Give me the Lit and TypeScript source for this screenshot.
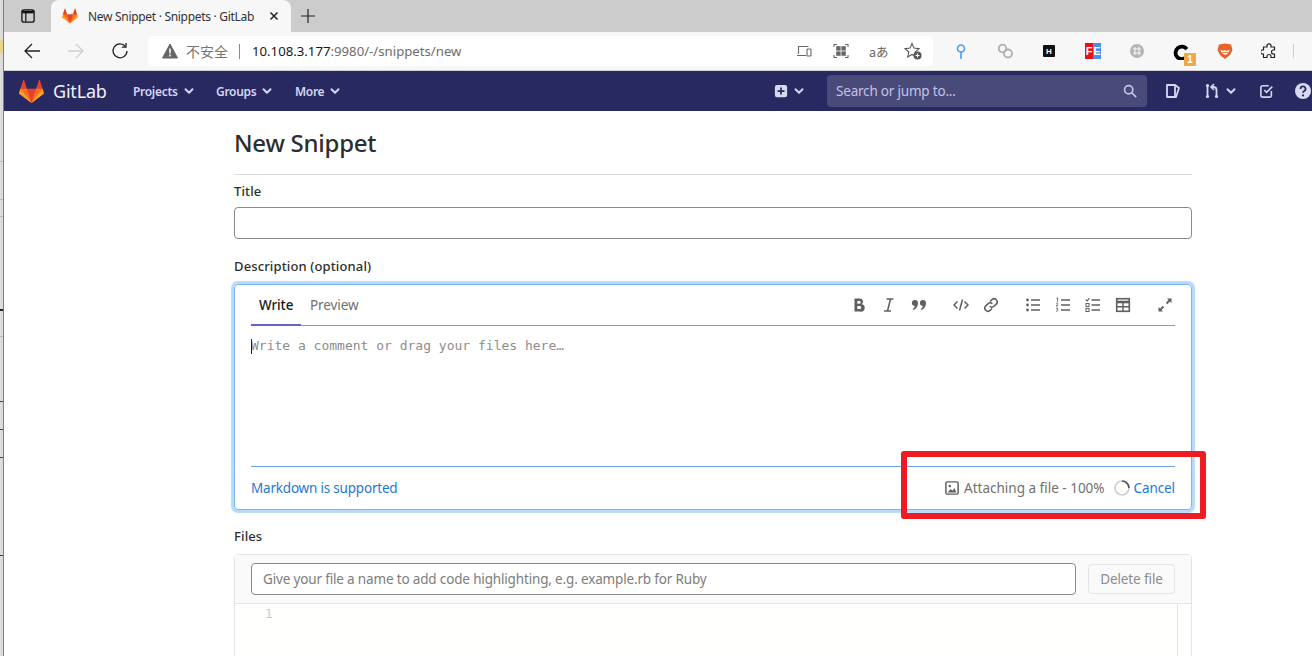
import { LitElement, html, css, svg } from "lit";
import { customElement } from "lit/decorators.js";

const tanuki = (w: number) => html`<svg width=${w} height=${w} viewBox="0 0 36 36">
  <path fill="#e24329" d="M2 14l9.38 9v-9l-4-12.28c-.205-.632-1.176-.632-1.38 0z"/>
  <path fill="#e24329" d="M34 14l-9.38 9v-9l4-12.28c.205-.632 1.176-.632 1.38 0z"/>
  <path fill="#e24329" d="M18,34.38 3,14 33,14 Z"/>
  <path fill="#fc6d26" d="M18,34.38 11.38,14 2,14 6,25Z"/>
  <path fill="#fc6d26" d="M18,34.38 24.62,14 34,14 30,25Z"/>
  <path fill="#fca326" d="M2 14L.1 20.16c-.18.565 0 1.2.5 1.56l17.42 12.66z"/>
  <path fill="#fca326" d="M34 14l1.9 6.16c.18.565 0 1.2-.5 1.56L18 34.38z"/>
</svg>`;

const chev = (c = "#d5d5f0") => html`<svg class="chev" width="10" height="10" viewBox="0 0 10 10" fill="none" stroke=${c} stroke-width="2" stroke-linecap="round" stroke-linejoin="round"><path d="M1.5 3.2 5 6.7l3.5-3.5"/></svg>`;

const ico = (w: number, body: unknown, vb = "0 0 16 16") => html`<svg width=${w} height=${w} viewBox=${vb} fill="none">${body}</svg>`;
const G = "#5f5f5f";
const N = "#d8d8f2";

@customElement("app-root")
export class AppRoot extends LitElement {
  static styles = css`
    :host { display: block; width: 1312px; height: 656px; overflow: hidden; background: #fff; font-family: "Noto Sans", sans-serif; color: #2e2e2e; position: relative; }
    * { box-sizing: border-box; }
    .page { display: flex; height: 656px; }
    .strip { width: 4px; flex: none; border-right: 1px solid #7d7d7d;
      background:
        linear-gradient(#222,#222) 0 309px/3px 2px no-repeat,
        linear-gradient(#bbb,#bbb) 0 161px/3px 1px no-repeat,
        linear-gradient(#bbb,#bbb) 0 199px/3px 1px no-repeat,
        linear-gradient(#bbb,#bbb) 0 216px/3px 1px no-repeat,
        linear-gradient(#bbb,#bbb) 0 336px/3px 1px no-repeat,
        linear-gradient(#444,#444) 0 401px/3px 1px no-repeat,
        linear-gradient(#444,#444) 0 429px/3px 1px no-repeat,
        linear-gradient(#444,#444) 0 457px/3px 1px no-repeat,
        linear-gradient(#246,#246) 0 555px/3px 1px no-repeat,
        linear-gradient(#e8d48c,#e8d48c) 0 40px/3px 13px no-repeat,
        #dcdcdc; }
    .main { flex: 1; min-width: 0; display: flex; flex-direction: column; overflow: hidden; }

    .tabs { height: 32px; background: #cccccc; display: flex; align-items: flex-start; flex: none; }
    .side-btn { width: 47px; height: 32px; display: flex; align-items: center; padding-left: 17px; }
    .tab { width: 240px; height: 32px; background: #f7f7f7; border-radius: 8px 8px 0 0; display: flex; align-items: center; padding-left: 11px; font-size: 12px; color: #333; }
    .tab-title { margin-left: 10px; width: 181px; white-space: nowrap; letter-spacing: -0.3px; flex: none; }
    .plus { margin-left: 9px; height: 32px; display: flex; align-items: center; }

    .toolbar { height: 39px; flex: none; background: #f7f7f7; display: flex; align-items: center; border-bottom: 1px solid #d2d2d2; position: relative; }
    .nav-btns { width: 144px; display: flex; align-items: center; padding-left: 19px; gap: 26px; flex: none; }
    .addr { width: 785px; height: 30px; flex: none; background: #fff; border-radius: 5px; display: flex; align-items: center; padding-left: 14px; font-size: 13.2px; color: #6d6d6d; }
    .warn { margin-right: 8px; display: flex; }
    .insecure { font-family: "Noto Sans CJK SC", sans-serif; font-size: 14px; color: #767676; }
    .addr-sep { width: 1px; height: 15px; background: #8a8a8a; margin: 0 12px 0 11px; }
    .host { color: #1a1a1a; }
    .addr-right { margin-left: auto; display: flex; align-items: center; padding-right: 11px; }
    .g21 { margin-left: 21px; display: flex; }
    .g19 { margin-left: 19px; display: flex; }
    .cjkA { font-size: 12.5px; color: #666; font-family: "Noto Sans CJK JP", sans-serif; width: 16px; white-space: nowrap; margin-left: 20px; }
    .exts { display: flex; align-items: center; margin-left: 20px; gap: 28px; flex: none; }
    .exts > * { flex: none; }
    .ext-sep { width: 1px; height: 14px; background: #cfcfcf; margin-left: -12px; flex: none; }
    .ext-last { margin-left: -11px; display: flex; }
    .hbox { width: 12px; height: 12px; margin: 0 2px; background: #111; color: #fff; border-radius: 1px; font: 700 8px "Liberation Sans", sans-serif; display: flex; align-items: center; justify-content: center; }
    .fe { width: 16px; height: 16px; display: flex; font: 700 11px/16px "Liberation Sans", sans-serif; color: #fff; }
    .fe span { display: block; width: 8px; text-align: center; }
    .fe .a { background: #e5101c; }
    .fe .b { background: #4a90ea; }
    .cbadge { position: relative; width: 16px; height: 16px; }
    .badge { position: absolute; left: 11px; top: 10px; width: 12px; height: 13px; background: #eda94c; color: #fff; border-radius: 1px; font: 700 10px/13px "Liberation Sans", sans-serif; text-align: center; }

    .gl { height: 40px; flex: none; background: #292961; display: flex; align-items: center; }
    .brand { display: flex; align-items: center; margin-left: 15px; gap: 9px; width: 114px; font-size: 18px; flex: none; }
    .brand b { font-weight: 400; letter-spacing: -0.2px; color: #f2f2f8; }
    .gl-item { display: flex; align-items: center; gap: 6px; font-size: 12px; font-weight: 600; color: #d5d5f0; white-space: nowrap; letter-spacing: -0.3px; flex: none; }
    .w1 { width: 83px; }
    .w2 { width: 79px; }
    .gl-right { margin-left: auto; display: flex; align-items: center; flex: none; width: 538px; }
    .plus-g { display: flex; align-items: center; gap: 6px; width: 53px; }
    .search { width: 320px; height: 32px; background: #4a4a7a; border-radius: 4px; display: flex; align-items: center; justify-content: space-between; padding: 0 10px 0 9px; font-size: 13.5px; color: #c2c2e6; letter-spacing: -0.2px; }
    .gl-icons { display: flex; align-items: center; margin-left: 18px; }
    .gl-icons > * { flex: none; }
    .mr { display: flex; align-items: center; gap: 6px; margin: 0 24px 0 23px; }
    .help { margin-left: 21px; position: relative; display: flex; }

    .content { width: 958px; margin-left: 230px; }
    h1 { font-size: 24px; line-height: 32px; font-weight: 500; margin: 0; padding: 16px 0 15px; border-bottom: 1px solid #dcdcdc; letter-spacing: -0.25px; height: 64px; color: #2e2e2e; }
    label { display: block; font-size: 13px; font-weight: 500; line-height: 18px; color: #2e2e2e; letter-spacing: 0.13px; }
    .l-title { margin-top: 7px; }
    .input { height: 32px; border: 1px solid #89888d; border-radius: 4px; background: #fff; margin-top: 7px; }
    .l-desc { margin-top: 18px; }

    .editor { margin-top: 9px; height: 226px; border: 1px solid #79b6f2; border-radius: 4px; box-shadow: 0 0 1px 3px #b9d9fb; padding: 0 16px; display: flex; flex-direction: column; }
    .ed-head { height: 41px; flex: none; border-bottom: 1px solid #6ca3e0; display: flex; align-items: stretch; font-size: 13.5px; }
    .t { display: flex; align-items: center; padding: 0 8px; letter-spacing: -0.1px; }
    .t.on { width: 50px; font-weight: 500; color: #1a1a1a; border-bottom: 2px solid #6666c4; margin-bottom: -1px; }
    .t.off { color: #707070; padding-left: 9px; }
    .tools { margin-left: auto; display: flex; align-items: center; margin-right: 2px; }
    .tool { width: 16px; height: 16px; display: flex; align-items: center; justify-content: center; flex: none; }
    .g14 { margin-left: 14px; }
    .g26 { margin-left: 26px; }
    .ed-body { flex: 1; display: flex; align-items: flex-start; padding-top: 12px; font: 13px/16px "DejaVu Sans Mono", monospace; color: #8d8d8d; border-bottom: 1px solid #6ca3e0; position: relative; white-space: pre; }
    .caret { position: absolute; left: 0; top: 13px; width: 1px; height: 15px; background: #222; }
    .ed-foot { height: 42px; flex: none; display: flex; align-items: center; font-size: 13.5px; color: #707070; }
    a { color: #1f78d1; text-decoration: none; }
    .md { letter-spacing: -0.2px; }
    .foot-r { margin-left: auto; display: flex; align-items: center; letter-spacing: -0.1px; }
    .att { margin-left: 5px; white-space: nowrap; letter-spacing: 0; }
    .spin { margin-left: 9px; margin-right: 4px; display: flex; }

    .l-files { margin-top: 17px; }
    .files { margin-top: 9px; height: 110px; border: 1px solid #e5e5e5; border-radius: 4px 4px 0 0; display: flex; flex-direction: column; }
    .f-head { height: 49px; flex: none; background: #fafafa; border-bottom: 1px solid #e5e5e5; display: flex; align-items: center; padding: 0 16px; gap: 12px; }
    .f-input { flex: 1; height: 32px; border: 1px solid #89888d; border-radius: 4px; background: #fff; display: flex; align-items: center; padding-left: 11px; font-size: 13.5px; color: #7d7d7d; white-space: nowrap; letter-spacing: -0.16px; }
    .del { width: 87px; height: 30px; border: 1px solid #e5e5e5; border-radius: 4px; background: #fafafa; display: flex; align-items: center; justify-content: center; font-size: 13.5px; color: #8c8c8c; letter-spacing: -0.1px; }
    .f-body { flex: 1; background: #fffffd; display: flex; font: 12.5px/16px "DejaVu Sans Mono", monospace; color: #c8c8c8; }
    .gut { padding: 2px 0 0 30px; }
    .sb { margin-left: auto; width: 14px; border-left: 1px solid #e5e5e5; background: #fff; }

    .mark { position: absolute; left: 901px; top: 451px; width: 305px; height: 68px; border: 6px solid #ed1c24; border-radius: 3px; pointer-events: none; }
  `;

  render() {
    return html`
      <div class="page">
        <div class="strip"></div>
        <div class="main">
          <div class="tabs">
            <div class="side-btn">${ico(14, svg`<rect x="1" y="1" width="14" height="14" rx="2.5" stroke="#111" stroke-width="1.5"/><path d="M1.5 3.5h13" stroke="#111" stroke-width="3"/><path d="M5.5 4.5v10" stroke="#111" stroke-width="1.4"/>`)}</div>
            <div class="tab">
              ${tanuki(16)}
              <span class="tab-title">New Snippet · Snippets · GitLab</span>
              ${ico(10, svg`<path d="M1.5 1.5l7 7M8.5 1.5l-7 7" stroke="#222" stroke-width="1.5"/>`, "0 0 10 10")}
            </div>
            <div class="plus">${ico(16, svg`<path d="M8 1v14M1 8h14" stroke="#222" stroke-width="1.2"/>`)}</div>
          </div>

          <div class="toolbar">
            <div class="nav-btns">
              ${ico(18, svg`<path d="M17 9H2M9 2 2 9l7 7" stroke="#222" stroke-width="1.3"/>`, "0 0 18 18")}
              ${ico(18, svg`<path d="M1 9h15M9 2l7 7-7 7" stroke="#cfcfcf" stroke-width="1.3"/>`, "0 0 18 18")}
              ${ico(18, svg`<path d="M14.5 4.5A7 7 0 1 0 16 9" stroke="#222" stroke-width="1.3"/><path d="M15 1v4.2h-4.2" stroke="#222" stroke-width="1.3"/>`, "0 0 18 18")}
            </div>
            <div class="addr">
              <span class="warn">${ico(16, svg`<path d="M8 1 .5 15h15z" fill="#666" stroke="#666" stroke-linejoin="round"/><path d="M8 5.5v5M8 11.5v2" stroke="#fff" stroke-width="1.5"/>`)}</span>
              <span class="insecure">不安全</span>
              <span class="addr-sep"></span>
              <span><span class="host">10.108.3.177</span>:9980/-/snippets/new</span>
              <div class="addr-right">
                ${ico(16, svg`<path d="M2.5 11V3.5h10M1 12.5h9" stroke="#666" stroke-width="1.1"/><rect x="11" y="6" width="4" height="7" rx=".6" stroke="#666" stroke-width="1.1"/>`)}
                <span class="g21">${ico(16, svg`<path d="M1 4V1.5h3M12 1.5h3V4M15 12v2.5h-3M4 14.5H1V12" stroke="#666" stroke-width="1.1"/><rect x="3.2" y="3.2" width="4.4" height="4.4" fill="#666"/><rect x="8.4" y="3.2" width="4.4" height="4.4" fill="#666"/><rect x="3.2" y="8.4" width="4.4" height="4.4" fill="#666"/><rect x="8.4" y="8.4" width="4.4" height="4.4" fill="#666"/>`)}</span>
                <span class="cjkA">aあ</span>
                <span class="g19">${ico(18, svg`<path d="M8 1.5l2 4.6 5 .5-3.8 3.3 1.1 4.9L8 12.5l-4.3 2.4 1.1-4.9L1 6.6l5-.5z" stroke="#555" stroke-width="1.1"/><circle cx="13.5" cy="13.5" r="4" fill="#555"/><path d="M13.5 11.5v4M11.5 13.5h4" stroke="#fff"/>`, "0 0 18 18")}</span>
              </div>
            </div>
            <div class="exts">
              ${ico(16, svg`<circle cx="8" cy="5.5" r="3.5" stroke="#4a9cf0" stroke-width="1.6"/><path d="M8 9v7" stroke="#4a9cf0" stroke-width="1.6"/>`)}
              ${ico(16, svg`<circle cx="5.5" cy="5.5" r="3.8" stroke="#b0b0b0" stroke-width="1.8"/><circle cx="11" cy="10.5" r="4" stroke="#b0b0b0" stroke-width="1.8"/>`)}
              <span class="hbox">H</span>
              <span class="fe"><span class="a">F</span><span class="b">E</span></span>
              ${ico(16, svg`<circle cx="8" cy="8" r="7" fill="#b5b5b5"/><path d="M4 6h8M4 10h8M6 4v8M10 4v8" stroke="#fff" stroke-width=".9"/>`)}
              <span class="cbadge">
                ${ico(16, svg`<path d="M13.2 13.2A6.2 6.2 0 1 1 13.8 5.2" stroke="#000" stroke-width="3.8"/>`)}
                <span class="badge">1</span>
              </span>
              ${ico(16, svg`<path d="M2 1.5 8 .5l6 1 1.5 5.5L13 12l-5 4-5-4L.5 7z" fill="#e8622a"/><path d="M3.5 6.5c2 1.6 3.5 1.6 4.5.6 1 1 2.5 1 4.5-.6-.5 3-2 4.8-4.5 5.5-2.5-.7-4-2.5-4.5-5.5z" fill="#fff"/><path d="M5 9.5h6" stroke="#e8622a" stroke-width=".8"/>`)}
              ${ico(16, svg`<path d="M6 2.8a2 2 0 0 1 4 0V4h3.5v3h-1a2 2 0 0 0 0 4h1v3.5H10v-1a2 2 0 0 0-4 0v1H2.5V11h-1a2 2 0 0 1 0-4h1V4H6z" stroke="#222" stroke-width="1.2"/>`)}
              <span class="ext-sep"></span>
              <span class="ext-last">${ico(16, svg`<path d="M3 3q3-2 6 0v5l-3 3-3-3z" stroke="#444" stroke-width="1.3"/>`)}</span>
            </div>
          </div>

          <div class="gl">
            <div class="brand">${tanuki(25)}<b>GitLab</b></div>
            <span class="gl-item w1">Projects ${chev()}</span>
            <span class="gl-item w2">Groups ${chev()}</span>
            <span class="gl-item">More ${chev()}</span>
            <div class="gl-right">
              <div class="plus-g">
                ${ico(14, svg`<rect x="1" y="1" width="14" height="14" rx="2.5" fill="${N}"/><path d="M8 4v8M4 8h8" stroke="#292961" stroke-width="2"/>`)}
                ${chev()}
              </div>
              <div class="search">
                <span>Search or jump to...</span>
                ${ico(14, svg`<circle cx="6.5" cy="6.5" r="4.7" stroke="#c2c2e6" stroke-width="2"/><path d="M10 10l4.5 4.5" stroke="#c2c2e6" stroke-width="2" stroke-linecap="round"/>`)}
              </div>
              <div class="gl-icons">
                ${ico(16, svg`<path d="M2 2h8l4 3-3 9H2z" stroke="${N}" stroke-width="1.8" stroke-linejoin="round"/><path d="M10 2v11" stroke="${N}" stroke-width="1.8"/>`)}
                <span class="mr">
                  ${ico(16, svg`<circle cx="3.5" cy="2.5" r="1.6" fill="${N}"/><circle cx="3.5" cy="13.5" r="1.6" fill="${N}"/><path d="M3.5 3v10" stroke="${N}" stroke-width="1.8"/><circle cx="12.5" cy="13.5" r="1.6" fill="${N}"/><path d="M12.5 13V7q0-3-3-3H8" stroke="${N}" stroke-width="1.8"/><path d="M10 1 7 4l3 3" stroke="${N}" stroke-width="1.6"/>`)}
                  ${chev()}
                </span>
                ${ico(14, svg`<path d="M13 8v5a2 2 0 0 1-2 2H3a2 2 0 0 1-2-2V4a2 2 0 0 1 2-2h7" stroke="${N}" stroke-width="1.8"/><path d="M5 7l2.5 2.5L14 3" stroke="${N}" stroke-width="1.8"/>`)}
                <span class="help">${ico(16, svg`<circle cx="8" cy="8" r="8" fill="${N}"/><path d="M5.5 6a2.5 2.5 0 1 1 3.5 2.2c-.7.4-1 .8-1 1.6" stroke="#292961" stroke-width="1.8"/><circle cx="8" cy="12.4" r="1.1" fill="#292961"/>`)}</span>
              </div>
            </div>
          </div>

          <div class="content">
            <h1>New Snippet</h1>
            <label class="l-title">Title</label>
            <div class="input"></div>
            <label class="l-desc">Description (optional)</label>
            <div class="editor">
              <div class="ed-head">
                <span class="t on">Write</span>
                <span class="t off">Preview</span>
                <div class="tools">
                  <span class="tool">${ico(16, svg`<path d="M3.5 1.5h5.2a3.2 3.2 0 0 1 2.1 5.7A3.5 3.5 0 0 1 9 14.5H3.5zM6.3 4v2.8h2a1.4 1.4 0 0 0 0-2.8zM6.3 9v3h2.5a1.5 1.5 0 0 0 0-3z" fill="${G}" fill-rule="evenodd"/>`)}</span>
                  <span class="tool g14">${ico(16, svg`<path d="M5.500 2h7M3 14h7M9.500 2l-3 12" stroke="${G}" stroke-width="1.5"/>`)}</span>
                  <span class="tool g14">${ico(16, svg`<path d="M3.2 3a3 3 0 0 1 3.8 3c0 3.5-2 6-4.6 7l-.6-1.2c1.2-.7 1.9-1.6 2.1-2.7A3.1 3.1 0 0 1 3.2 3zM11.2 3a3 3 0 0 1 3.8 3c0 3.5-2 6-4.6 7l-.6-1.2c1.2-.7 1.9-1.6 2.1-2.7A3.1 3.1 0 0 1 11.2 3z" fill="${G}"/>`)}</span>
                  <span class="tool g26">${ico(16, svg`<path d="M4.5 4.5 1 8l3.5 3.5M11.5 4.5 15 8l-3.5 3.5M9.5 2.5l-3 11" stroke="${G}" stroke-width="1.5"/>`)}</span>
                  <span class="tool g14">${ico(16, svg`<path d="M7 4.5l1.8-1.8a3 3 0 0 1 4.4 4.4L11 9.3a3 3 0 0 1-4.3 0M9 11.500l-1.8 1.8a3 3 0 0 1-4.4-4.4L5 6.7a3 3 0 0 1 4.3 0" stroke="${G}" stroke-width="1.6"/>`)}</span>
                  <span class="tool g26">${ico(16, svg`<circle cx="2.5" cy="3" r="1.4" fill="${G}"/><circle cx="2.5" cy="8" r="1.4" fill="${G}"/><circle cx="2.5" cy="13" r="1.4" fill="${G}"/><path d="M6 3h9M6 8h9M6 13h9" stroke="${G}" stroke-width="1.6"/>`)}</span>
                  <span class="tool g14">${ico(16, svg`<path d="M1.5 1.2 2.6.8v3.8M1 6.3c.8-.6 2-.3 1.8.6-.1.6-1.8 1.6-1.8 2h2.2M1.2 11.2h1.6l-.9 1.2c1.4 0 1.4 2.2-.9 1.8" stroke="${G}" stroke-width=".9"/><path d="M6 3h9M6 8h9M6 13h9" stroke="${G}" stroke-width="1.6"/>`)}</span>
                  <span class="tool g14">${ico(16, svg`<path d="M.8 2.5l1.4 1.4L4.5 1.2" stroke="${G}" stroke-width="1.1"/><rect x="1" y="6.5" width="3" height="3" stroke="${G}"/><rect x="1" y="11.5" width="3" height="3" stroke="${G}"/><path d="M6.5 3h8.5M6.5 8h8.5M6.5 13h8.5" stroke="${G}" stroke-width="1.6"/>`)}</span>
                  <span class="tool g14">${ico(16, svg`<rect x="1.7" y="1.7" width="12.6" height="12.6" stroke="${G}" stroke-width="1.6"/><path d="M1.7 5h12.6" stroke="${G}" stroke-width="2.6"/><path d="M1.7 9.7h12.6M8 5v9" stroke="${G}" stroke-width="1.4"/>`)}</span>
                  <span class="tool g26">${ico(16, svg`<path d="M10 1.5h4.5V6zM1.5 10 6 14.5H1.5z" fill="${G}"/><path d="M12.5 3.5 9.5 6.5M3.5 12.5l3-3" stroke="${G}" stroke-width="1.8"/>`)}</span>
                </div>
              </div>
              <div class="ed-body"><span class="caret"></span>Write a comment or drag your files here…</div>
              <div class="ed-foot">
                <a class="md">Markdown is supported</a>
                <div class="foot-r">
                  ${ico(14, svg`<rect x="1" y="1" width="14" height="14" rx="1.5" stroke="${G}" stroke-width="1.7"/><circle cx="5.5" cy="5.7" r="1.4" fill="${G}"/><path d="M3 13l3.5-4 2 2 2.2-3L13 13z" fill="${G}"/>`)}
                  <span class="att">Attaching a file - 100%</span>
                  <span class="spin">${ico(16, svg`<circle cx="8" cy="8" r="7" stroke="#d0d0d0" stroke-width="1.7"/><path d="M8 1a7 7 0 0 1 7 7" stroke="#555" stroke-width="1.7"/>`)}</span>
                  <a>Cancel</a>
                </div>
              </div>
            </div>
            <label class="l-files">Files</label>
            <div class="files">
              <div class="f-head">
                <div class="f-input">Give your file a name to add code highlighting, e.g. example.rb for Ruby</div>
                <div class="del">Delete file</div>
              </div>
              <div class="f-body"><span class="gut">1</span><span class="sb"></span></div>
            </div>
          </div>
        </div>
      </div>
      <div class="mark"></div>
    `;
  }
}
